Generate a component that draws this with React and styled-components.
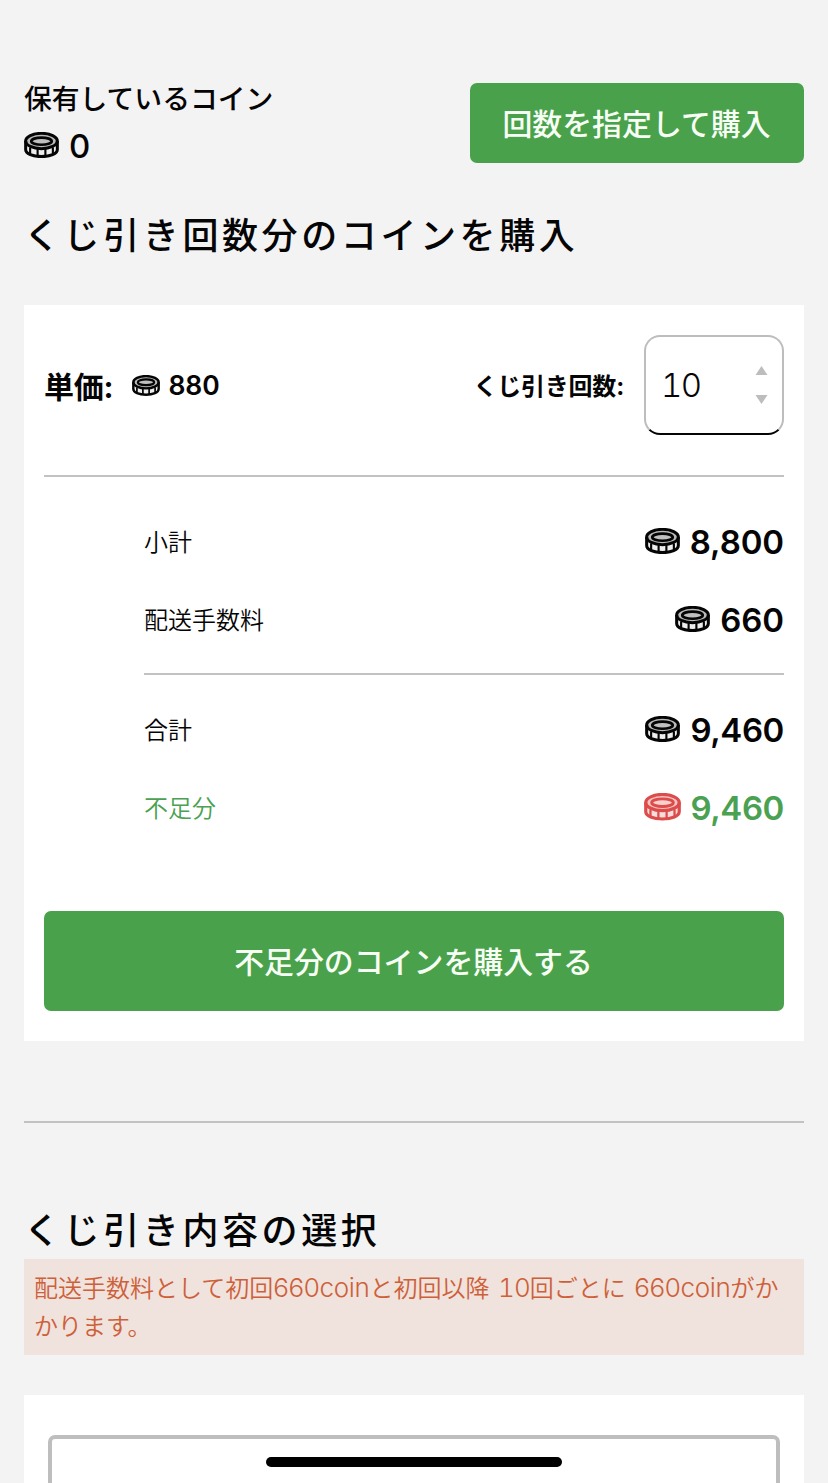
import React from 'react';
import styled, { createGlobalStyle } from 'styled-components';

const GlobalStyle = createGlobalStyle`
  * {
    box-sizing: border-box;
  }

  body {
    margin: 0;
    background: #f3f3f3;
    color: #050505;
    font-family: Inter, 'Noto Sans CJK JP', sans-serif;
  }
`;

const Page = styled.main`
  height: 1483px;
  overflow: hidden;
  padding: 83px 24px 0;
`;

const Header = styled.header`
  display: flex;
  justify-content: space-between;
  height: 80px;
`;

const Balance = styled.div`
  display: flex;
  flex-direction: column;
`;

const BalanceLabel = styled.span`
  font-size: 27.8px;
  font-weight: 500;
  line-height: 32px;
  white-space: nowrap;
  margin-bottom: 13px;
`;

const Button = styled.button`
  display: flex;
  align-items: center;
  justify-content: center;
  width: ${props => props.$width || '100%'};
  height: ${props => props.$height}px;
  padding: 0 1px 2px 0;
  border: none;
  border-radius: 7px;
  background: #4aa14b;
  color: #f7fff5;
  font-family: inherit;
  font-size: 29.9px;
  font-weight: 500;
  white-space: nowrap;
`;

const Title = styled.h2`
  margin: ${props => props.$top}px 0 ${props => props.$bottom || 0}px;
  font-size: 36px;
  font-weight: 500;
  line-height: 60px;
  letter-spacing: 3.6px;
  white-space: nowrap;
`;

const Card = styled.section`
  height: 736px;
  padding: 30px 20px;
  background: #fff;
`;

const CountRow = styled.div`
  display: flex;
  align-items: center;
  height: 100px;
`;

const PriceLabel = styled.span`
  margin-right: 19px;
  padding-bottom: 1px;
  font-size: 30px;
  font-weight: 700;
  letter-spacing: -0.2px;
`;

const CountLabel = styled.label`
  margin-left: auto;
  margin-right: 20px;
  padding-bottom: 2px;
  font-size: 24px;
  font-weight: 700;
  letter-spacing: -0.2px;
`;

const CountBox = styled.div`
  display: flex;
  align-items: center;
  justify-content: space-between;
  width: 140px;
  height: 100px;
  padding: 0 14px 0 15px;
  border: 2px solid #bdbdbd;
  border-bottom-color: #050505;
  border-radius: 16px;
  font-size: 33px;
  font-weight: 300;
  font-variant-numeric: tabular-nums;
  letter-spacing: -1.5px;
`;

const Arrows = styled.svg`
  width: 13px;
  height: 38px;
  fill: #bdbdbd;
`;

const Divider = styled.hr`
  height: 2px;
  margin: ${props => props.$margin};
  border: none;
  background: #c2c2c2;
`;

const Summary = styled.div`
  margin: 0 0 65px 100px;
`;

const SummaryRow = styled.div`
  display: flex;
  align-items: center;
  justify-content: space-between;
  height: 78px;
  color: ${props => (props.$lack ? '#4aa152' : 'inherit')};
`;

const SummaryLabel = styled.span`
  padding-bottom: 2px;
  font-size: 24px;
  font-weight: 350;
`;

const AmountWrapper = styled.span`
  display: flex;
  align-items: center;
  gap: ${props => props.$gap}px;
  font-size: ${props => props.$size}px;
  font-weight: ${props => props.$weight};
  line-height: 34px;
`;

const AmountValue = styled.span`
  padding-top: ${props => (props.$small ? 0 : 2)}px;
  line-height: 32px;
  letter-spacing: ${props => (props.$tight ? -0.4 : -0.1)}px;
`;

const CoinSvg = styled.svg`
  width: ${props => props.$width}px;
  height: ${props => props.$width * 0.75}px;
  color: ${props => (props.$red ? '#dc4c4a' : '#050505')};
`;

const Notice = styled.p`
  height: 96px;
  margin: 0;
  padding: 11px 10px;
  background: #f0e2dc;
  color: #cd6039;
  font-size: 24px;
  font-weight: 350;
  line-height: 38px;
  white-space: nowrap;
  word-spacing: 1.8px;
`;

const Latin = styled.span`
  font-size: 26px;
  font-weight: 300;
  line-height: 1;
  font-variant-numeric: ${props => (props.$tabular ? 'tabular-nums' : 'normal')};
  letter-spacing: ${props => (props.$tabular ? -1 : -0.35)}px;
`;

const SelectCard = styled.section`
  height: 120px;
  margin-top: 40px;
  padding: 40px 24px 0;
  background: #fff;
`;

const SelectBox = styled.div`
  height: 100px;
  border: 4px solid #bebebe;
  border-radius: 7px;
`;

const HomeIndicator = styled.div`
  position: fixed;
  bottom: 16px;
  left: 266px;
  width: 296px;
  height: 10px;
  border-radius: 5px;
  background: #000;
`;

const Coin = ({ width, red }) => (
  <CoinSvg viewBox="0 0 36 27" $width={width} $red={red}>
    <path d="M1.5 10v8C1.5 22.5 9 25.5 18 25.5S34.5 22.5 34.5 18V10z" fill={red ? '#f7dedd' : '#eee'} />
    <ellipse cx="18" cy="9.3" rx="16.3" ry="7.9" fill={red ? '#f5c3c1' : '#b9b9b9'} />
    <g fill="none" stroke="currentColor">
      <path d="M6.3 16v7M14 17.5v8M22 17.5v8M29.7 16v7" strokeWidth="2.2" />
      <ellipse cx="18" cy="9.3" rx="16.3" ry="7.9" strokeWidth="3.1" />
      <ellipse cx="18" cy="9.4" rx="10.5" ry="3.7" fill={red ? '#f7cfcd' : '#c0c0c0'} strokeWidth="2.8" />
      <path d="M1.7 9.3V18C1.7 22.5 9 25.3 18 25.3S34.3 22.5 34.3 18V9.3" strokeWidth="3.1" />
    </g>
  </CoinSvg>
);

const Amount = ({ value, small, red, tight, weight = 600 }) => (
  <AmountWrapper $gap={small ? 8 : red ? 9 : 10} $size={small ? 26.5 : 33} $weight={weight}>
    <Coin width={small ? 28 : red ? 37 : 35} red={red} />
    <AmountValue $small={small} $tight={tight}>{value}</AmountValue>
  </AmountWrapper>
);

const App = () => {
  return (
    <>
      <GlobalStyle />
      <Page>
        <Header>
          <Balance>
            <BalanceLabel>保有しているコイン</BalanceLabel>
            <Amount value="0" weight={500} />
          </Balance>
          <Button $width="334px" $height={80}>回数を指定して購入</Button>
        </Header>
        <Title $top={43} $bottom={39}>くじ引き回数分のコインを購入</Title>
        <Card>
          <CountRow>
            <PriceLabel>単価:</PriceLabel>
            <Amount value="880" small />
            <CountLabel>くじ引き回数:</CountLabel>
            <CountBox>
              10
              <Arrows viewBox="0 0 13 38">
                <path d="M6.5 0 12.5 9H.5zM6.5 38 .5 29h12z" />
              </Arrows>
            </CountBox>
          </CountRow>
          <Divider $margin="40px 0 25px" />
          <Summary>
            <SummaryRow>
              <SummaryLabel>小計</SummaryLabel>
              <Amount value="8,800" />
            </SummaryRow>
            <SummaryRow>
              <SummaryLabel>配送手数料</SummaryLabel>
              <Amount value="660" />
            </SummaryRow>
            <Divider $margin="15px 0" />
            <SummaryRow>
              <SummaryLabel>合計</SummaryLabel>
              <Amount value="9,460" tight />
            </SummaryRow>
            <SummaryRow $lack>
              <SummaryLabel>不足分</SummaryLabel>
              <Amount value="9,460" red tight />
            </SummaryRow>
          </Summary>
          <Button $height={100}>不足分のコインを購入する</Button>
        </Card>
        <Divider $margin="80px 0 0" />
        <Title $top={78} $bottom={-2}>くじ引き内容の選択</Title>
        <Notice>
          配送手数料として初回<Latin>660coin</Latin>と初回以降 <Latin $tabular>10</Latin>回ごとに <Latin>660coin</Latin>がか
          <br />
          かります。
        </Notice>
        <SelectCard>
          <SelectBox />
        </SelectCard>
      </Page>
      <HomeIndicator />
    </>
  );
};

export default App;
